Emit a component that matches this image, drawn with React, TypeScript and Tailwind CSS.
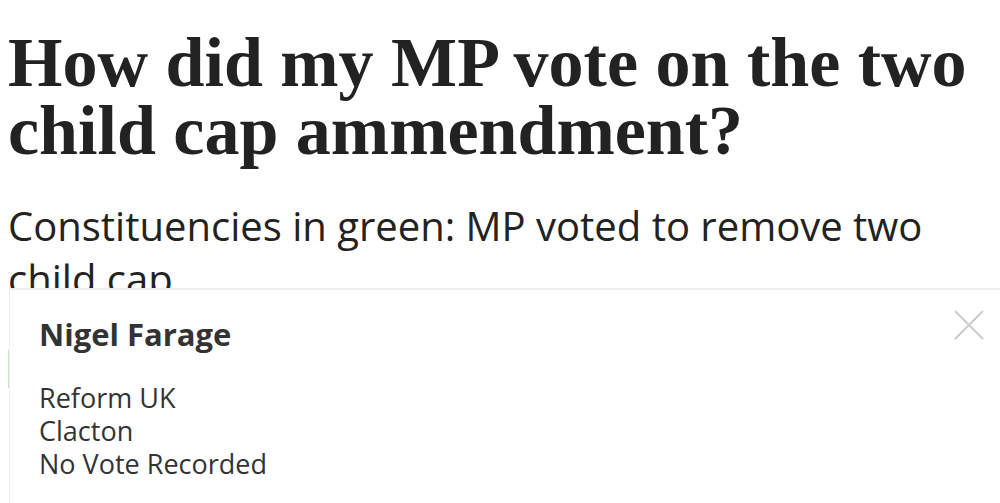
export default function App() {
  return (
    <div className="relative w-[1000px] h-[503px] overflow-hidden bg-white text-[#222]">
      <div className="px-2 pt-[29px]">
        <h1 className="font-['Liberation_Serif',serif] font-bold text-[70px] leading-[68px]">
          How did my MP vote on the two child cap ammendment?
        </h1>
        <p className="mt-[34px] font-['Open_Sans',sans-serif] text-[40px] leading-[53px] pr-[40px]">
          Constituencies in green: MP voted to remove two child cap
        </p>
      </div>

      {/* map edge peeking out */}
      <div className="absolute left-[8px] top-[350px] w-px h-[38px] bg-[#cfe3c8]" />

      {/* popup */}
      <div className="absolute left-[9px] top-[288px] w-[1000px] h-[230px] bg-white border-t-2 border-l border-[#eeeeee] px-[29px] pt-[24px] font-['Open_Sans',sans-serif] text-[#333] flex flex-col gap-[27px]">
        <button className="absolute right-[24px] top-[19px] w-[32px] h-[32px] text-[#cccccc]">
          <svg viewBox="0 0 32 32" className="w-full h-full" fill="none" stroke="currentColor" strokeWidth="2">
            <path d="M2 2 L30 30 M30 2 L2 30" />
          </svg>
        </button>
        <div className="font-bold text-[31px] leading-[40px]">Nigel Farage</div>
        <div className="flex flex-col text-[27px] leading-[33px]">
          <div>Reform UK</div>
          <div>Clacton</div>
          <div>No Vote Recorded</div>
        </div>
      </div>
    </div>
  );
}
